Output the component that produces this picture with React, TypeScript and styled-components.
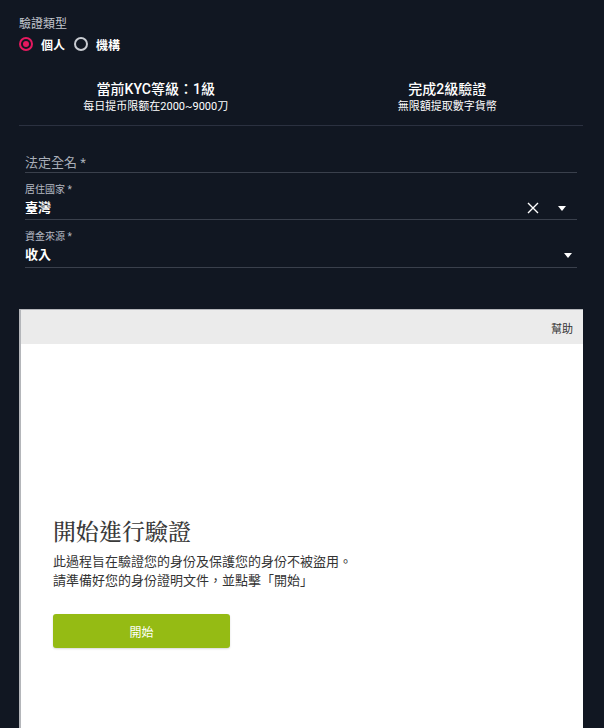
import React from 'react';
import styled, { createGlobalStyle } from 'styled-components';

const GlobalStyle = createGlobalStyle`
  html, body {
    margin: 0;
    padding: 0;
    background: #111722;
  }
  body {
    font-family: Roboto, "Noto Sans CJK TC", sans-serif;
    color: #fff;
    overflow: hidden;
  }
`;

const Page = styled.div`
  width: 564px;
  margin-left: 19px;
  min-height: 728px;
`;

const GroupLabel = styled.div`
  margin-top: 16px;
  font-size: 12px;
  line-height: 16px;
  color: #c3c7cf;
`;

const RadioRow = styled.div`
  display: flex;
  align-items: center;
  height: 20px;
  margin-top: 2px;
`;

const RadioItem = styled.label`
  display: flex;
  align-items: center;
  gap: 8px;
  margin-right: 9px;
  font-size: 12px;
  font-weight: 700;
  color: #fff;
`;

const RadioDot = styled.span<{ $checked?: boolean }>`
  box-sizing: border-box;
  width: 14px;
  height: 14px;
  border-radius: 50%;
  border: 2px solid ${(p) => (p.$checked ? '#e6195f' : '#c9ccd2')};
  display: flex;
  align-items: center;
  justify-content: center;
  &::after {
    content: '';
    display: ${(p) => (p.$checked ? 'block' : 'none')};
    width: 6px;
    height: 6px;
    border-radius: 50%;
    background: #e6195f;
  }
`;

const LevelGrid = styled.div`
  display: grid;
  grid-template-columns: 1fr 1fr;
  margin: 25px -10px 0 -9px;
  padding-bottom: 11px;
  position: relative;
  &::after {
    content: '';
    position: absolute;
    left: 9px;
    right: 10px;
    bottom: 0;
    height: 1px;
    background: #2b3140;
  }
`;

const LevelCol = styled.div`
  text-align: center;
`;

const LevelTitle = styled.div`
  font-size: 14px;
  line-height: 20px;
  font-weight: 500;
`;

const LevelSub = styled.div`
  font-size: 11px;
  line-height: 16px;
`;

const Fields = styled.div`
  margin: 0 6px;
`;

const Field = styled.div<{ $top: number; $pb: number }>`
  display: flex;
  align-items: flex-end;
  margin-top: ${(p) => p.$top}px;
  padding-bottom: ${(p) => p.$pb}px;
  border-bottom: 1px solid #3a404c;
`;

const FieldBody = styled.div`
  flex: 1;
`;

const Placeholder = styled.div`
  font-size: 13px;
  line-height: 18px;
  color: #a9aeb8;
`;

const SmallLabel = styled.div`
  font-size: 10px;
  line-height: 14px;
  color: #b5b9c2;
  margin-bottom: 2px;
`;

const Value = styled.div`
  font-size: 13px;
  line-height: 18px;
  font-weight: 700;
  color: #fff;
`;

const Adornments = styled.div<{ $gap: number; $right: number }>`
  display: flex;
  align-items: center;
  gap: ${(p) => p.$gap}px;
  height: 18px;
  margin-right: ${(p) => p.$right}px;
`;

const Frame = styled.div`
  margin-top: 41px;
  background: #fff;
  border-top: 1px solid #b4b6ba;
  border-left: 2px solid #b4b6ba;
  height: 420px;
`;

const FrameHeader = styled.div`
  height: 34px;
  background: #ebebeb;
  display: flex;
  align-items: center;
  justify-content: flex-end;
  padding: 2px 10px 0 0;
  box-sizing: border-box;
  font-size: 11px;
  color: #333;
`;

const FrameBody = styled.div`
  padding: 171px 0 0 32px;
  color: #333;
`;

const StartTitle = styled.h1`
  margin: 0;
  font-family: "Noto Serif CJK TC", "Noto Sans CJK TC", serif;
  font-weight: 500;
  font-size: 23px;
  line-height: 32px;
  color: #3a3a3a;
`;

const StartText = styled.p`
  margin: 4px 0 0;
  font-family: "Noto Sans CJK TC", sans-serif;
  font-size: 13px;
  line-height: 19px;
  color: #333;
`;

const StartButton = styled.button`
  display: block;
  margin-top: 25px;
  width: 177px;
  height: 34px;
  border: none;
  border-radius: 3px;
  background: #95bb14;
  color: #fff;
  font-family: "Noto Sans CJK TC", sans-serif;
  font-size: 12px;
  box-shadow: 0 1px 2px rgba(0, 0, 0, 0.15);
`;

const Caret = () => (
  <svg width="8" height="5" viewBox="0 0 8 5">
    <path d="M0 0h8L4 5z" fill="#fff" />
  </svg>
);

const Cross = () => (
  <svg width="12" height="12" viewBox="0 0 12 12">
    <path d="M1 1l10 10M11 1L1 11" stroke="#fff" strokeWidth="1.4" />
  </svg>
);

export default function App() {
  return (
    <>
      <GlobalStyle />
      <Page>
        <GroupLabel>驗證類型</GroupLabel>
        <RadioRow>
          <RadioItem>
            <RadioDot $checked />
            個人
          </RadioItem>
          <RadioItem>
            <RadioDot />
            機構
          </RadioItem>
        </RadioRow>

        <LevelGrid>
          <LevelCol>
            <LevelTitle>當前KYC等級：1級</LevelTitle>
            <LevelSub>每日提币限额在2000~9000刀</LevelSub>
          </LevelCol>
          <LevelCol>
            <LevelTitle>完成2級驗證</LevelTitle>
            <LevelSub>無限額提取數字貨幣</LevelSub>
          </LevelCol>
        </LevelGrid>

        <Fields>
          <Field $top={28} $pb={0}>
            <FieldBody>
              <Placeholder>法定全名 *</Placeholder>
            </FieldBody>
          </Field>
          <Field $top={10} $pb={2}>
            <FieldBody>
              <SmallLabel>居住國家 *</SmallLabel>
              <Value>臺灣</Value>
            </FieldBody>
            <Adornments $gap={19} $right={11}>
              <Cross />
              <Caret />
            </Adornments>
          </Field>
          <Field $top={10} $pb={3}>
            <FieldBody>
              <SmallLabel>資金來源 *</SmallLabel>
              <Value>收入</Value>
            </FieldBody>
            <Adornments $gap={0} $right={5}>
              <Caret />
            </Adornments>
          </Field>
        </Fields>

        <Frame>
          <FrameHeader>幫助</FrameHeader>
          <FrameBody>
            <StartTitle>開始進行驗證</StartTitle>
            <StartText>
              此過程旨在驗證您的身份及保護您的身份不被盜用。
              <br />
              請準備好您的身份證明文件，並點擊「開始」
            </StartText>
            <StartButton>開始</StartButton>
          </FrameBody>
        </Frame>
      </Page>
    </>
  );
}
